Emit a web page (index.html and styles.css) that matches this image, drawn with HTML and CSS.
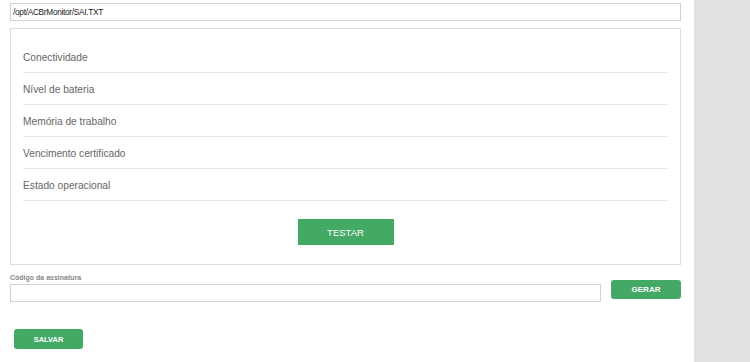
FILE: index.html
```html
<!DOCTYPE html>
<html lang="pt-BR">
  <head>
    <meta charset="UTF-8" />
    <title>SAT – Configuração</title>
    <link rel="stylesheet" href="styles.css">
  </head>
  <body>
    <div class="page">
      <main class="main">
        <input class="field path" value="/opt/ACBrMonitor/SAI.TXT" />

        <div class="panel">
          <ul class="status">
            <li>Conectividade</li>
            <li>Nível de bateria</li>
            <li>Memória de trabalho</li>
            <li>Vencimento certificado</li>
            <li>Estado operacional</li>
          </ul>
          <div class="center">
            <button class="btn btn-test" type="button">TESTAR</button>
          </div>
        </div>

        <div class="sign-row">
          <div class="sign-col">
            <label for="sign">Código da assinatura</label>
            <input id="sign" class="field" />
          </div>
          <button class="btn btn-small" type="button">GERAR</button>
        </div>

        <button class="btn btn-small btn-save" type="button">SALVAR</button>
      </main>
      <aside class="side"></aside>
    </div>
  </body>
</html>
```

FILE: styles.css
```css
body {
  margin: 0;
  background: #fff;
  font-family: "Liberation Sans", Arial, sans-serif;
  color: #333;
}
.page {
  display: flex;
  min-height: 362px;
}
.main {
  width: 671px;
  padding: 3px 13px 0 10px;
}
.side {
  flex: 1;
  background: #e1e1e1;
}
.field {
  display: block;
  box-sizing: border-box;
  width: 100%;
  height: 18px;
  margin: 0;
  padding: 0 2px;
  border: 1px solid #d2d2d2;
  font-family: inherit;
  font-size: 9px;
  color: #222;
  outline: none;
}
.path {
  font-size: 8.3px;
  letter-spacing: -0.3px;
}
.panel {
  margin-top: 7px;
  height: 237px;
  box-sizing: border-box;
  border: 1px solid #dcdcdc;
  padding: 12px 12px 0 12px;
}
.status {
  list-style: none;
  margin: 0 0 18px;
  padding: 0;
}
.status li {
  height: 31px;
  line-height: 33px;
  border-bottom: 1px solid #e6e6e6;
  font-size: 10.2px;
  color: #666;
}
.center {
  display: flex;
  justify-content: center;
}
.btn {
  border: none;
  background: #43a964;
  color: #fff;
  font-family: inherit;
  cursor: pointer;
  padding: 0;
}
.btn-test {
  width: 96px;
  height: 26px;
  font-size: 9.5px;
}
.btn-small {
  width: 70px;
  height: 19px;
  border-radius: 3px;
  font-size: 8px;
  font-weight: bold;
}
.sign-row {
  display: flex;
  align-items: flex-start;
  gap: 10px;
  margin-top: 8px;
}
.sign-col {
  width: 591px;
}
.sign-col label {
  display: block;
  font-size: 7px;
  font-weight: bold;
  color: #888;
  height: 11px;
  line-height: 9px;
}
.sign-row .btn-small {
  margin-top: 7px;
}
.btn-save {
  display: block;
  margin: 27px 0 0 4px;
  width: 69px;
  height: 20px;
  font-size: 7.5px;
}
```
